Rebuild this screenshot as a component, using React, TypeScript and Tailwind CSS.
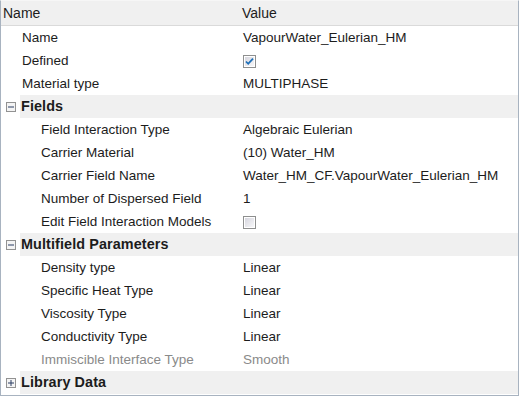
import React from "react";

type Row =
  | { kind: "prop"; name: string; value?: string; check?: boolean; indent: number; disabled?: boolean }
  | { kind: "group"; name: string; open: boolean };

const rows: Row[] = [
  { kind: "prop", name: "Name", value: "VapourWater_Eulerian_HM", indent: 1 },
  { kind: "prop", name: "Defined", check: true, indent: 1 },
  { kind: "prop", name: "Material type", value: "MULTIPHASE", indent: 1 },
  { kind: "group", name: "Fields", open: true },
  { kind: "prop", name: "Field Interaction Type", value: "Algebraic Eulerian", indent: 2 },
  { kind: "prop", name: "Carrier Material", value: "(10) Water_HM", indent: 2 },
  { kind: "prop", name: "Carrier Field Name", value: "Water_HM_CF.VapourWater_Eulerian_HM", indent: 2 },
  { kind: "prop", name: "Number of Dispersed Field", value: "1", indent: 2 },
  { kind: "prop", name: "Edit Field Interaction Models", check: false, indent: 2 },
  { kind: "group", name: "Multifield Parameters", open: true },
  { kind: "prop", name: "Density type", value: "Linear", indent: 2 },
  { kind: "prop", name: "Specific Heat Type", value: "Linear", indent: 2 },
  { kind: "prop", name: "Viscosity Type", value: "Linear", indent: 2 },
  { kind: "prop", name: "Conductivity Type", value: "Linear", indent: 2 },
  { kind: "prop", name: "Immiscible Interface Type", value: "Smooth", indent: 2, disabled: true },
  { kind: "group", name: "Library Data", open: false },
];

function Checkbox({ checked }: { checked: boolean }) {
  return (
    <svg width="13" height="13" viewBox="0 0 13 13">
      <defs>
        <linearGradient id={checked ? "gc" : "gu"} x1="0" y1="0" x2="1" y2="1">
          <stop offset="0" stopColor="#d6d6de" />
          <stop offset="1" stopColor="#f7f7f9" />
        </linearGradient>
      </defs>
      <rect x="0.5" y="0.5" width="12" height="12" fill="#ffffff" stroke="#8e8f8f" />
      <rect x="2" y="2" width="9" height="9" fill={`url(#${checked ? "gc" : "gu"})`} />
      {checked && (
        <path d="M3 6.5 L5.2 8.8 L10 3.6" fill="none" stroke="#1d6fb8" strokeWidth="1.8" />
      )}
    </svg>
  );
}

function Expander({ open }: { open: boolean }) {
  return (
    <svg width="10" height="10" viewBox="0 0 10 10">
      <rect x="0.5" y="0.5" width="9" height="9" fill="#f4f4f4" stroke="#929292" />
      <path d="M2 5 H8" stroke="#2b3c63" strokeWidth="1" />
      {!open && <path d="M5 2 V8" stroke="#2b3c63" strokeWidth="1" />}
    </svg>
  );
}

export default function App() {
  return (
    <div
      className="w-[519px] h-[396px] bg-white border-l border-r border-b border-t border-l-[#a8b3c0] border-r-[#a8b3c0] border-b-[#a8b3c0] border-t-[#f6f6f6] box-border overflow-hidden text-[#1c1c1c]"
      style={{ fontFamily: '"Liberation Sans", Arial, sans-serif' }}
    >
      <div className="h-[25px] flex items-center bg-[#f0f0f0] border-b border-[#dadada] text-[14px]">
        <div className="w-[240px] pl-[2px]">Name</div>
        <div className="pl-[1px]">Value</div>
      </div>
      {rows.map((r, i) =>
        r.kind === "group" ? (
          <div key={i} className="h-[23px] flex items-center">
            <div className="w-[19px] flex justify-center pl-[1px]">
              <Expander open={r.open} />
            </div>
            <div className="flex-1 h-full bg-[#f0f0f0] flex items-center text-[14.4px] font-bold pl-[1px] pt-[1px] tracking-[0.1px]">
              {r.name}
            </div>
          </div>
        ) : (
          <div key={i} className="h-[23px] flex items-center text-[13.5px] pt-[1px]">
            <div
              className={`w-[241px] ${r.indent === 1 ? "pl-[21px]" : "pl-[40px]"} ${
                r.disabled ? "text-[#8a8a8a]" : ""
              } whitespace-nowrap`}
            >
              {r.name}
            </div>
            <div className={`pl-[1px] whitespace-nowrap flex items-center ${r.disabled ? "text-[#8a8a8a]" : ""}`}>
              {r.check !== undefined ? <Checkbox checked={r.check} /> : r.value}
            </div>
          </div>
        )
      )}
    </div>
  );
}
